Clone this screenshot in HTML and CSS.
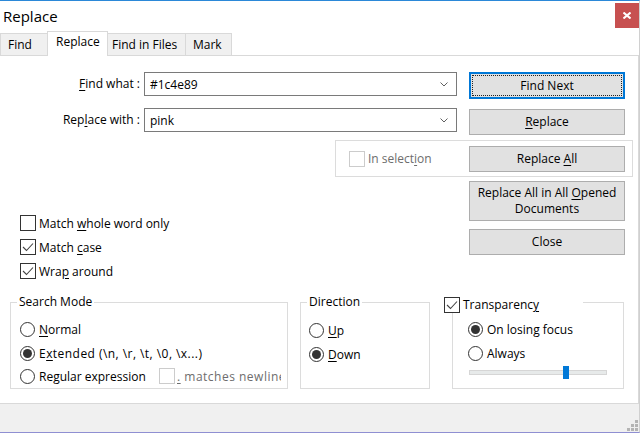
FILE: index.html
```html
<!DOCTYPE html>
<html>
<head>
<meta charset="utf-8">
<link rel="stylesheet" href="styles.css">
</head>
<body>
<div class="window">
  <div class="titlebar">
    <span class="title">Replace</span>
    <div class="close"><svg width="8" height="7" viewBox="0 0 8 7"><path d="M0.5 0.5 L7.5 6.5 M7.5 0.5 L0.5 6.5" stroke="#fff" stroke-width="2" fill="none"/></svg></div>
  </div>
  <div class="tabs">
    <div class="tab t1">Find</div>
    <div class="tab t2 active">Replace</div>
    <div class="tab t3">Find in Files</div>
    <div class="tab t4">Mark</div>
  </div>
  <div class="panel">
    <div class="row r1">
      <span class="lbl"><u>F</u>ind what :</span>
      <div class="combo"><span>#1c4e89</span><svg width="8" height="5" viewBox="0 0 8 5"><path d="M0.5 0.5 L4 4 L7.5 0.5" stroke="#606060" fill="none"/></svg></div>
      <div class="btn default"><span>Find Next</span></div>
    </div>
    <div class="row r2">
      <span class="lbl">Rep<u>l</u>ace with :</span>
      <div class="combo"><span>pink</span><svg width="8" height="5" viewBox="0 0 8 5"><path d="M0.5 0.5 L4 4 L7.5 0.5" stroke="#606060" fill="none"/></svg></div>
      <div class="btn b-replace"><span><u>R</u>eplace</span></div>
    </div>
    <div class="row r3">
      <div class="selgrp">
        <span class="cb disabled"></span>
        <span class="dim">In select<u>i</u>on</span>
        <div class="btn b-all"><span>Replace <u>A</u>ll</span></div>
      </div>
    </div>
    <div class="row r4">
      <div class="opts">
        <div class="opt"><span class="cb"></span><span>Match <u>w</u>hole word only</span></div>
        <div class="opt"><span class="cb"><svg width="12" height="10" viewBox="0 0 12 10"><path d="M1 5 L4.5 8.5 L11 1.5" stroke="#444" stroke-width="1.1" fill="none"/></svg></span><span>Match <u>c</u>ase</span></div>
        <div class="opt"><span class="cb"><svg width="12" height="10" viewBox="0 0 12 10"><path d="M1 5 L4.5 8.5 L11 1.5" stroke="#444" stroke-width="1.1" fill="none"/></svg></span><span>Wra<u>p</u> around</span></div>
      </div>
      <div class="btncol">
        <div class="btn tall"><span>Replace All in All <u>O</u>pened<br>Documents</span></div>
        <div class="btn b-close"><span>Close</span></div>
      </div>
    </div>
    <div class="groups">
      <fieldset class="grp g-mode">
        <legend>Search Mode</legend>
        <div class="opt m1"><span class="rb"></span><span><u>N</u>ormal</span></div>
        <div class="opt m2"><span class="rb on"></span><span class="ext">E<u>x</u>tended (\n, \r, \t, \0, \x...)</span></div>
        <div class="opt m3 regex"><span class="rb"></span><span class="regex-text">Re<u>g</u>ular expression</span><span class="cb disabled"></span><span class="dim nl"><u>.</u> matches newline</span></div>
      </fieldset>
      <fieldset class="grp g-dir">
        <legend>Direction</legend>
        <div class="opt d1"><span class="rb"></span><span><u>U</u>p</span></div>
        <div class="opt d2"><span class="rb on"></span><span><u>D</u>own</span></div>
      </fieldset>
      <fieldset class="grp g-trans">
        <legend><span class="leg-in"><span class="cb"><svg width="12" height="10" viewBox="0 0 12 10"><path d="M1 5 L4.5 8.5 L11 1.5" stroke="#444" stroke-width="1.1" fill="none"/></svg></span><span>Transparenc<u>y</u></span></span></legend>
        <div class="opt t-1"><span class="rb on"></span><span>On losing focus</span></div>
        <div class="opt t-2"><span class="rb"></span><span>Always</span></div>
        <div class="slider"><div class="track"></div><div class="thumb"></div></div>
      </fieldset>
    </div>
  </div>
  <div class="statusbar">
    <svg class="grip" width="11" height="11" viewBox="0 0 11 11">
      <rect x="8" y="0" width="3" height="3" fill="#b4b4b4"/>
      <rect x="4" y="4" width="3" height="3" fill="#b4b4b4"/>
      <rect x="8" y="4" width="3" height="3" fill="#b4b4b4"/>
      <rect x="0" y="8" width="3" height="3" fill="#b4b4b4"/>
      <rect x="4" y="8" width="3" height="3" fill="#b4b4b4"/>
      <rect x="8" y="8" width="3" height="3" fill="#b4b4b4"/>
    </svg>
  </div>
</div>
</body>
</html>
```
FILE: styles.css
```css
* { box-sizing: border-box; }
html, body { margin: 0; padding: 0; }
body {
  width: 642px;
  height: 433px;
  background: #fff;
  font-family: "Open Sans", "Noto Sans", sans-serif;
  font-size: 12px;
  color: #000;
  overflow: hidden;
}
u { text-decoration: underline; text-underline-offset: 2px; }

.window {
  width: 640px;
  height: 433px;
  border-top: 1px solid #2b88d8;
  border-right: 1px solid #d0d0d0;
  border-bottom: 1px solid #8f8fd2;
  display: flex;
  flex-direction: column;
}

/* title bar */
.titlebar {
  flex: none;
  height: 30px;
  display: flex;
  justify-content: space-between;
  align-items: flex-start;
}
.title {
  font-size: 15px;
  line-height: 31px;
  padding-left: 3px;
}
.close {
  width: 24px;
  height: 25px;
  margin-top: 2px;
  background: #c75050;
  display: flex;
  align-items: center;
  justify-content: center;
}

/* tabs */
.tabs {
  flex: none;
  height: 24px;
  display: flex;
  align-items: flex-end;
  position: relative;
  z-index: 1;
}
.tab {
  height: 22px;
  border: 1px solid #d9d9d9;
  border-bottom: 0;
  background: #f0f0f0;
  margin-right: -1px;
  line-height: 21px;
  padding-left: 6px;
}
.tab.active {
  height: 25px;
  background: #fff;
  margin-bottom: -1px;
  line-height: 20px;
}
.t1 { width: 48px; padding-left: 7px; }
.t2 { width: 61px; padding-left: 8px; }
.t3 { width: 79px; padding-left: 4px; }
.t4 { width: 47px; padding-left: 7px; }

/* panel */
.panel {
  flex: none;
  width: 639px;
  height: 349px;
  border: 1px solid #d9d9d9;
  border-left: 0;
  background: #fff;
}
.row { display: flex; align-items: flex-start; }
.r1 { margin-top: 16px; height: 27px; }
.r2 { margin-top: 9px; height: 27px; }
.r3 { margin-top: 5px; }
.r4 { margin-top: 4px; }

.lbl {
  width: 140px;
  text-align: right;
  line-height: 24px;
  flex: none;
}
.combo {
  width: 313px;
  height: 24px;
  margin-left: 4px;
  border: 1px solid #7a7a7a;
  display: flex;
  align-items: center;
  justify-content: space-between;
  padding: 0 8px 0 5px;
  flex: none;
}
.btn {
  width: 156px;
  height: 26px;
  background: #e1e1e1;
  border: 1px solid #adadad;
  display: flex;
  align-items: center;
  justify-content: center;
  text-align: center;
  line-height: 16px;
  flex: none;
}
.row > .btn { margin-left: 12px; }
.btn.default {
  height: 27px;
  border-color: #0078d7;
  box-shadow: inset 0 0 0 1px #0078d7;
  position: relative;
}
.btn.default::after {
  content: "";
  position: absolute;
  inset: 2px;
  border: 1px dotted #222;
}
.b-replace { margin-top: 1px; }

.selgrp {
  margin-left: 335px;
  width: 298px;
  height: 37px;
  border: 1px solid #dcdcdc;
  display: flex;
  align-items: center;
  padding: 0 7px 0 13px;
}
.selgrp .btn { margin-left: auto; }

.opts {
  margin-left: 20px;
  width: 449px;
  padding-top: 34px;
  flex: none;
}
.opts .opt + .opt { margin-top: 8px; }
.btncol { flex: none; width: 156px; }
.btn.tall { height: 40px; }
.b-close { margin-top: 8px; }

.opt {
  display: flex;
  align-items: center;
  height: 16px;
  white-space: nowrap;
}
.cb {
  width: 16px;
  height: 16px;
  border: 1px solid #333;
  background: #fff;
  flex: none;
  display: flex;
  align-items: center;
  justify-content: center;
  margin-right: 3px;
}
.cb.disabled { border-color: #cccccc; }
.rb {
  width: 15px;
  height: 15px;
  border: 1px solid #333;
  border-radius: 50%;
  flex: none;
  display: flex;
  align-items: center;
  justify-content: center;
  margin-right: 4px;
}
.rb.on::after {
  content: "";
  width: 9px;
  height: 9px;
  border-radius: 50%;
  background: #333;
}
.dim { color: #6d6d6d; }

/* group boxes */
.groups {
  display: flex;
  align-items: flex-start;
  margin-top: 15px;
}
.grp {
  margin: 0;
  padding: 0;
  min-width: 0;
  border: 1px solid #dcdcdc;
  flex: none;
}
.grp legend {
  padding: 0 2px;
  margin-left: 6px;
  line-height: 16px;
  height: 16px;
}
.g-mode { margin-left: 10px; width: 278px; height: 95px; }
.g-mode .opt { margin-left: 9px; }
.g-dir { margin-left: 12px; width: 130px; height: 95px; }
.g-dir .opt { margin-left: 8px; }
.g-trans { margin-left: 22px; margin-top: 3px; width: 172px; height: 92px; }
.g-trans .opt { margin-left: 15px; }
.g-trans legend {
  height: 10px;
  width: 139px;
  margin-left: -9px;
  padding: 0;
}
.leg-in { display: flex; align-items: center; height: 16px; }

.m1 { margin-top: 11px; }
.m2 { margin-top: 8px; }
.m3 { margin-top: 7px; }
.ext { letter-spacing: 0.45px; }
.regex { width: 261px; overflow: hidden; }
.regex-text { width: 120px; flex: none; }
.nl { flex: none; letter-spacing: 0.5px; margin-left: -1px; }
.d1 { margin-top: 12px; }
.d2 { margin-top: 8px; }
.t-1 { margin-top: 14px; }
.t-2 { margin-top: 8px; }

.slider {
  position: relative;
  width: 138px;
  height: 13px;
  margin: 5px 0 0 16px;
  display: flex;
  align-items: center;
}
.track {
  width: 100%;
  height: 5px;
  background: #e7eaea;
  border: 1px solid #d6d6d6;
}
.thumb {
  position: absolute;
  left: 94px;
  top: 0;
  width: 6px;
  height: 13px;
  background: #0078d7;
}

/* status bar */
.statusbar {
  flex: none;
  height: 28px;
  background: #f0f0f0;
  display: flex;
  justify-content: flex-end;
  align-items: flex-end;
  padding: 0 1px 1px 0;
}
```
